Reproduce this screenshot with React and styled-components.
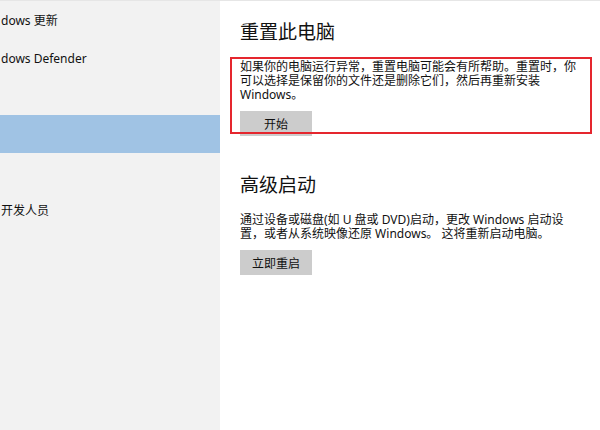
import React from "react";
import styled, { createGlobalStyle } from "styled-components";

const GlobalStyle = createGlobalStyle`
  html, body {
    margin: 0;
    padding: 0;
    background: #ffffff;
  }
  body {
    font-family: "Noto Sans", "Noto Sans CJK SC", sans-serif;
    color: #000;
  }
`;

const Page = styled.div`
  display: flex;
  width: 600px;
  height: 430px;
  border-top: 1px solid #e6e6e6;
  box-sizing: border-box;
  overflow: hidden;
`;

const Sidebar = styled.nav`
  width: 220px;
  flex-shrink: 0;
  background: #f2f2f2;
  overflow: hidden;
`;

const NavItem = styled.div`
  height: 38px;
  display: flex;
  align-items: center;
  padding-left: 1px;
  background: ${(p) => (p.active ? "#a0c3e4" : "transparent")};
  font-size: 12px;
  color: #111;
  white-space: nowrap;
`;

const Content = styled.main`
  flex: 1;
  background: #fff;
  padding: 17px 0 0 20px;
`;

const Section = styled.section`
  position: relative;
  & + & {
    margin-top: 35px;
  }
`;

const Title = styled.h2`
  margin: 0;
  font-family: "Noto Sans CJK SC", sans-serif;
  font-size: 19px;
  font-weight: 400;
  line-height: 26px;
  color: #111;
`;

const Text = styled.p`
  margin: 16px 0 0;
  width: 340px;
  font-size: 12px;
  line-height: 14px;
  color: #111;
`;

const Button = styled.button`
  display: block;
  margin-top: 9px;
  width: 72px;
  height: 25px;
  padding: 0;
  border: none;
  background: #cccccc;
  font-family: "Noto Sans", "Noto Sans CJK SC", sans-serif;
  font-size: 12px;
  color: #111;
`;

// red annotation frame drawn over the first section
const Marker = styled.div`
  position: absolute;
  left: -10px;
  top: 39px;
  width: 362px;
  height: 77px;
  border: 2px solid #e5262e;
  box-sizing: border-box;
  pointer-events: none;
`;

// the window is cropped on the left edge, only the tail of each label shows
const navItems = [
  { id: "update", label: "dows 更新" },
  { id: "defender", label: "dows Defender" },
  { id: "backup", label: "" },
  { id: "recovery", label: "", active: true },
  { id: "activation", label: "" },
  { id: "dev", label: "开发人员" },
];

export default function App() {
  return (
    <>
      <GlobalStyle />
      <Page>
        <Sidebar>
          {navItems.map((item) => (
            <NavItem key={item.id} active={item.active}>
              {item.label}
            </NavItem>
          ))}
        </Sidebar>
        <Content>
          <Section>
            <Title>重置此电脑</Title>
            <Text>
              如果你的电脑运行异常，重置电脑可能会有所帮助。重置时，你可以选择是保留你的文件还是删除它们，然后再重新安装
              Windows。
            </Text>
            <Button>开始</Button>
            <Marker />
          </Section>
          <Section>
            <Title>高级启动</Title>
            <Text>
              通过设备或磁盘(如 U 盘或 DVD)启动，更改 Windows 启动设置，或者从系统映像还原 Windows。 这将重新启动电脑。
            </Text>
            <Button>立即重启</Button>
          </Section>
        </Content>
      </Page>
    </>
  );
}
